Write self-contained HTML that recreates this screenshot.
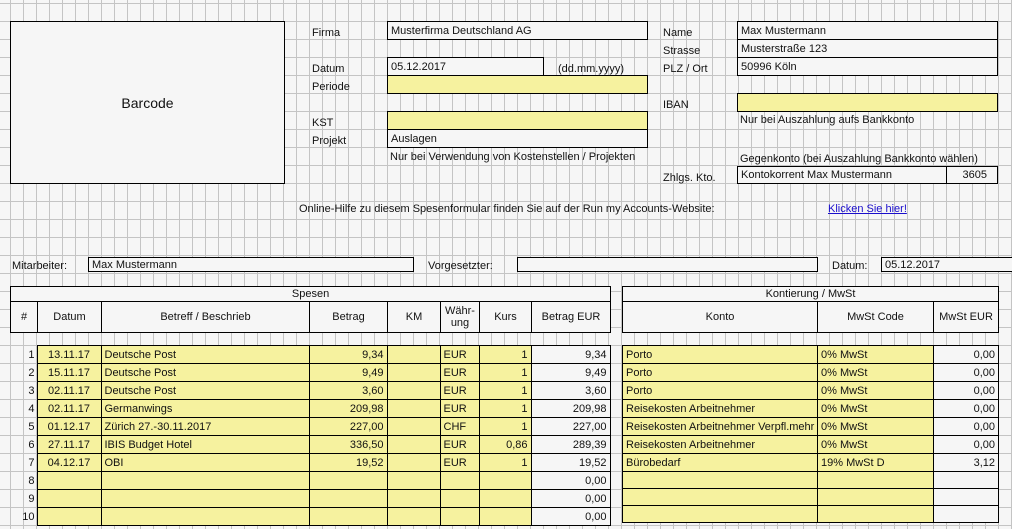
<!DOCTYPE html>
<html><head><meta charset="utf-8"><style>
html,body{margin:0;width:1012px;height:529px;overflow:hidden}
body{position:relative;font-family:"Liberation Sans",Arial,sans-serif;font-size:11px;color:#111;
background-color:#f6f6f6;
background-image:linear-gradient(to right,#c4c4c4 1px,transparent 1px),linear-gradient(to bottom,#c4c4c4 1px,transparent 1px);
background-size:13px 18px;background-position:10px 3px;}
.a{position:absolute;white-space:nowrap;line-height:18px}
.b{position:absolute;border:1px solid #000;box-sizing:border-box;background:#f6f6f6;line-height:18px;padding-left:3px;white-space:nowrap;overflow:hidden}
.y{background:#f6f29f}
table{position:absolute;border-collapse:collapse;table-layout:fixed}
td{border:1px solid #000;padding:2px 3px 0;height:17px;line-height:15px;white-space:nowrap;overflow:hidden;box-sizing:border-box}
td.y{background:#f6f29f}
td.w{background:#f6f6f6}
td.n{border:none;text-align:right;padding-right:2px}
.r{text-align:right}
.c{text-align:center}
th{border:1px solid #000;font-weight:normal;background:#f6f6f6;text-align:center;line-height:12px;padding:0}
</style></head><body>
<div class="b" style="left:10px;top:21px;width:275px;height:163px;line-height:163px;text-align:center;font-size:14px;padding:0">Barcode</div>

<div class="a" style="left:312px;top:24px">Firma</div>
<div class="b" style="left:387px;top:21px;width:261px;height:19px">Musterfirma Deutschland AG</div>
<div class="a" style="left:312px;top:60px">Datum</div>
<div class="b" style="left:387px;top:57px;width:157px;height:19px">05.12.2017</div>
<div class="a" style="left:558px;top:60px">(dd.mm.yyyy)</div>
<div class="a" style="left:312px;top:78px">Periode</div>
<div class="b y" style="left:387px;top:75px;width:261px;height:19px"></div>
<div class="a" style="left:312px;top:114px">KST</div>
<div class="b y" style="left:387px;top:111px;width:261px;height:19px"></div>
<div class="a" style="left:312px;top:132px">Projekt</div>
<div class="b" style="left:387px;top:129px;width:261px;height:19px">Auslagen</div>
<div class="a" style="left:390px;top:148px">Nur bei Verwendung von Kostenstellen / Projekten</div>

<div class="a" style="left:663px;top:24px">Name</div>
<div class="b" style="left:737px;top:21px;width:261px;height:19px">Max Mustermann</div>
<div class="a" style="left:663px;top:42px">Strasse</div>
<div class="b" style="left:737px;top:39px;width:261px;height:19px">Musterstraße 123</div>
<div class="a" style="left:663px;top:60px">PLZ / Ort</div>
<div class="b" style="left:737px;top:57px;width:261px;height:19px">50996 Köln</div>
<div class="a" style="left:663px;top:96px">IBAN</div>
<div class="b y" style="left:737px;top:93px;width:261px;height:19px"></div>
<div class="a" style="left:740px;top:111px">Nur bei Auszahlung aufs Bankkonto</div>
<div class="a" style="left:740px;top:150px">Gegenkonto (bei Auszahlung Bankkonto wählen)</div>
<div class="a" style="left:663px;top:169px">Zhlgs. Kto.</div>
<div class="b" style="left:737px;top:166px;width:210px;height:18px;line-height:17px">Kontokorrent Max Mustermann</div>
<div class="b" style="left:946px;top:166px;width:52px;height:18px;line-height:17px;text-align:right;padding-right:10px">3605</div>

<div class="a" style="left:299px;top:200px">Online-Hilfe zu diesem Spesenformular finden Sie auf der Run my Accounts-Website:</div>
<div class="a" style="left:828px;top:200px;color:#1a0dcc;text-decoration:underline">Klicken Sie hier!</div>

<div class="a" style="left:12px;top:257px">Mitarbeiter:</div>
<div class="b" style="left:88px;top:257px;width:326px;height:15px;line-height:14px">Max Mustermann</div>
<div class="a" style="left:428px;top:257px">Vorgesetzter:</div>
<div class="b" style="left:517px;top:257px;width:301px;height:15px"></div>
<div class="a" style="left:832px;top:257px">Datum:</div>
<div class="b" style="left:881px;top:257px;width:140px;height:15px;line-height:14px">05.12.2017</div>

<table style="left:10px;top:286px;width:600px">
<colgroup><col style="width:27px"><col style="width:64px"><col style="width:208px"><col style="width:78px"><col style="width:53px"><col style="width:39px"><col style="width:52px"><col style="width:79px"></colgroup>
<tr><th colspan="8" style="height:14px">Spesen</th></tr>
<tr style="height:31px"><th>#</th><th>Datum</th><th>Betreff / Beschrieb</th><th>Betrag</th><th>KM</th><th>Währ-<br>ung</th><th>Kurs</th><th>Betrag EUR</th></tr>
</table>
<table style="left:622px;top:286px;width:376px">
<colgroup><col style="width:195px"><col style="width:116px"><col style="width:65px"></colgroup>
<tr><th colspan="3" style="height:14px">Kontierung / MwSt</th></tr>
<tr style="height:31px"><th>Konto</th><th>MwSt Code</th><th>MwSt EUR</th></tr>
</table>

<table style="left:10px;top:345px;width:600px">
<colgroup><col style="width:27px"><col style="width:64px"><col style="width:208px"><col style="width:78px"><col style="width:53px"><col style="width:39px"><col style="width:52px"><col style="width:79px"></colgroup>
<tr><td class="n">1</td><td class="y c">13.11.17</td><td class="y">Deutsche Post</td><td class="y r">9,34</td><td class="y"></td><td class="y">EUR</td><td class="y r">1</td><td class="w r">9,34</td></tr>
<tr><td class="n">2</td><td class="y c">15.11.17</td><td class="y">Deutsche Post</td><td class="y r">9,49</td><td class="y"></td><td class="y">EUR</td><td class="y r">1</td><td class="w r">9,49</td></tr>
<tr><td class="n">3</td><td class="y c">02.11.17</td><td class="y">Deutsche Post</td><td class="y r">3,60</td><td class="y"></td><td class="y">EUR</td><td class="y r">1</td><td class="w r">3,60</td></tr>
<tr><td class="n">4</td><td class="y c">02.11.17</td><td class="y">Germanwings</td><td class="y r">209,98</td><td class="y"></td><td class="y">EUR</td><td class="y r">1</td><td class="w r">209,98</td></tr>
<tr><td class="n">5</td><td class="y c">01.12.17</td><td class="y">Zürich 27.-30.11.2017</td><td class="y r">227,00</td><td class="y"></td><td class="y">CHF</td><td class="y r">1</td><td class="w r">227,00</td></tr>
<tr><td class="n">6</td><td class="y c">27.11.17</td><td class="y">IBIS Budget Hotel</td><td class="y r">336,50</td><td class="y"></td><td class="y">EUR</td><td class="y r">0,86</td><td class="w r">289,39</td></tr>
<tr><td class="n">7</td><td class="y c">04.12.17</td><td class="y">OBI</td><td class="y r">19,52</td><td class="y"></td><td class="y">EUR</td><td class="y r">1</td><td class="w r">19,52</td></tr>
<tr><td class="n">8</td><td class="y"></td><td class="y"></td><td class="y"></td><td class="y"></td><td class="y"></td><td class="y"></td><td class="w r">0,00</td></tr>
<tr><td class="n">9</td><td class="y"></td><td class="y"></td><td class="y"></td><td class="y"></td><td class="y"></td><td class="y"></td><td class="w r">0,00</td></tr>
<tr><td class="n">10</td><td class="y"></td><td class="y"></td><td class="y"></td><td class="y"></td><td class="y"></td><td class="y"></td><td class="w r">0,00</td></tr>
</table>
<table style="left:622px;top:345px;width:376px">
<colgroup><col style="width:195px"><col style="width:116px"><col style="width:65px"></colgroup>
<tr><td class="y">Porto</td><td class="y">0% MwSt</td><td class="w r">0,00</td></tr>
<tr><td class="y">Porto</td><td class="y">0% MwSt</td><td class="w r">0,00</td></tr>
<tr><td class="y">Porto</td><td class="y">0% MwSt</td><td class="w r">0,00</td></tr>
<tr><td class="y">Reisekosten Arbeitnehmer</td><td class="y">0% MwSt</td><td class="w r">0,00</td></tr>
<tr><td class="y">Reisekosten Arbeitnehmer Verpfl.mehr</td><td class="y">0% MwSt</td><td class="w r">0,00</td></tr>
<tr><td class="y">Reisekosten Arbeitnehmer</td><td class="y">0% MwSt</td><td class="w r">0,00</td></tr>
<tr><td class="y">Bürobedarf</td><td class="y">19% MwSt D</td><td class="w r">3,12</td></tr>
<tr><td class="y"></td><td class="y"></td><td class="w"></td></tr>
<tr><td class="y"></td><td class="y"></td><td class="w"></td></tr>
<tr><td class="y"></td><td class="y"></td><td class="w"></td></tr>
</table>
</body></html>
